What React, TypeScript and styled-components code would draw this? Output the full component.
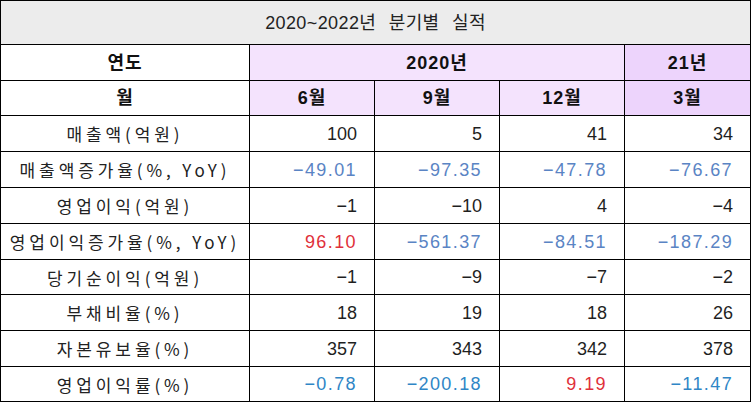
import React from "react";
import styled, { createGlobalStyle } from "styled-components";

const GlobalStyle = createGlobalStyle`
  html, body {
    margin: 0;
    padding: 0;
    background: #ffffff;
  }
  body {
    font-family: "Liberation Sans", "Noto Sans CJK KR", sans-serif;
    color: #1a1a1a;
  }
`;

type Tone = "plain" | "blue" | "sky" | "red";

const toneColor: Record<Tone, string> = {
  plain: "#1f1f1f",
  blue: "#5a84c4",
  sky: "#2f86c6",
  red: "#e0303a",
};

const Table = styled.table`
  width: 750px;
  border-collapse: collapse;
  table-layout: fixed;
  font-size: 17px;
`;

const TitleCell = styled.th`
  height: 43px;
  background: #ececec;
  border: 1px solid #000;
  font-weight: normal;
  font-size: 18px;
  letter-spacing: 0.4px;
  word-spacing: 7px;
  color: #222;
  padding: 0;
  line-height: 1;
`;

const HeadCell = styled.th<{ $shade?: "light" | "dark" | "none"; $h: number }>`
  height: ${(p) => p.$h}px;
  border: 1px solid #000;
  padding: 0;
  line-height: 1;
  font-weight: bold;
  font-size: 18px;
  letter-spacing: 1px;
  color: #111;
  background: ${(p) =>
    p.$shade === "light" ? "#f4e3fd" : p.$shade === "dark" ? "#edd4fc" : "#ffffff"};
`;

const BodyRow = styled.tr<{ $h: number }>`
  height: ${(p) => p.$h}px;
`;

const Label = styled.td`
  border: 1px solid #000;
  padding: 0;
  line-height: 1;
  text-align: center;
  font-family: "Noto Sans CJK KR", "Liberation Sans", sans-serif;
  font-size: 17px;
  letter-spacing: 3.9px;
  color: #222;
`;

const Value = styled.td<{ $tone: Tone }>`
  border: 1px solid #000;
  padding: 0 17px 0 0;
  line-height: 1;
  text-align: right;
  font-size: 18px;
  color: ${(p) => toneColor[p.$tone]};
  letter-spacing: ${(p) => (p.$tone === "plain" ? "0" : "1.4px")};
`;

type Row = { label: string; h: number; values: [string, Tone][] };

const rows: Row[] = [
  {
    label: "매출액(억원)",
    h: 36,
    values: [["100", "plain"], ["5", "plain"], ["41", "plain"], ["34", "plain"]],
  },
  {
    label: "매출액증가율(%, YoY)",
    h: 36,
    values: [["−49.01", "blue"], ["−97.35", "blue"], ["−47.78", "blue"], ["−76.67", "blue"]],
  },
  {
    label: "영업이익(억원)",
    h: 36,
    values: [["−1", "plain"], ["−10", "plain"], ["4", "plain"], ["−4", "plain"]],
  },
  {
    label: "영업이익증가율(%, YoY)",
    h: 36,
    values: [["96.10", "red"], ["−561.37", "blue"], ["−84.51", "blue"], ["−187.29", "blue"]],
  },
  {
    label: "당기순이익(억원)",
    h: 35,
    values: [["−1", "plain"], ["−9", "plain"], ["−7", "plain"], ["−2", "plain"]],
  },
  {
    label: "부채비율(%)",
    h: 36,
    values: [["18", "plain"], ["19", "plain"], ["18", "plain"], ["26", "plain"]],
  },
  {
    label: "자본유보율(%)",
    h: 36,
    values: [["357", "plain"], ["343", "plain"], ["342", "plain"], ["378", "plain"]],
  },
  {
    label: "영업이익률(%)",
    h: 35,
    values: [["−0.78", "sky"], ["−200.18", "sky"], ["9.19", "red"], ["−11.47", "sky"]],
  },
];

const App = () => {
  return (
    <>
      <GlobalStyle />
      <Table>
        <colgroup>
          <col style={{ width: 249 }} />
          <col style={{ width: 125 }} />
          <col style={{ width: 125 }} />
          <col style={{ width: 125 }} />
          <col style={{ width: 126 }} />
        </colgroup>
        <thead>
          <tr>
            <TitleCell colSpan={5}>2020~2022년 분기별 실적</TitleCell>
          </tr>
          <tr>
            <HeadCell $shade="none" $h={35}>연도</HeadCell>
            <HeadCell $shade="light" $h={35} colSpan={3}>
              2020년
            </HeadCell>
            <HeadCell $shade="dark" $h={35}>21년</HeadCell>
          </tr>
          <tr>
            <HeadCell $shade="none" $h={34}>월</HeadCell>
            <HeadCell $shade="light" $h={34}>6월</HeadCell>
            <HeadCell $shade="light" $h={34}>9월</HeadCell>
            <HeadCell $shade="light" $h={34}>12월</HeadCell>
            <HeadCell $shade="dark" $h={34}>3월</HeadCell>
          </tr>
        </thead>
        <tbody>
          {rows.map((row) => (
            <BodyRow key={row.label} $h={row.h}>
              <Label>{row.label}</Label>
              {row.values.map(([v, tone], i) => (
                <Value key={i} $tone={tone}>
                  {v}
                </Value>
              ))}
            </BodyRow>
          ))}
        </tbody>
      </Table>
    </>
  );
};

export default App;
